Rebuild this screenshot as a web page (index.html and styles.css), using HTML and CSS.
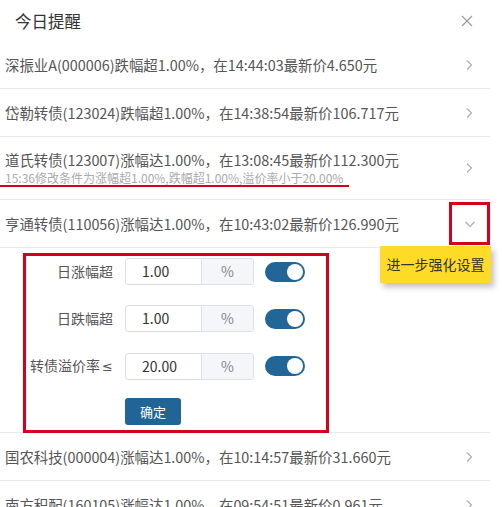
FILE: index.html
```html
<!DOCTYPE html>
<html lang="zh-CN">
<head>
<meta charset="utf-8">
<title>今日提醒</title>
<link rel="stylesheet" href="styles.css">
</head>
<body>
<div class="panel">
  <div class="header">
    <span class="title">今日提醒</span>
    <svg class="close" width="12" height="12" viewBox="0 0 12 12"><path d="M1 1L11 11M11 1L1 11" stroke="#999" stroke-width="1.1" fill="none"/></svg>
  </div>
  <ul class="list">
    <li class="row">
      <div class="text">深振业A(000006)跌幅超1.00%，在14:44:03最新价4.650元</div>
      <span class="chev"><svg width="8" height="12" viewBox="0 0 8 12"><path d="M2 1.5L6.5 6L2 10.5" stroke="#aaa" stroke-width="1.1" fill="none"/></svg></span>
    </li>
    <li class="row">
      <div class="text">岱勒转债(123024)跌幅超1.00%，在14:38:54最新价106.717元</div>
      <span class="chev"><svg width="8" height="12" viewBox="0 0 8 12"><path d="M2 1.5L6.5 6L2 10.5" stroke="#aaa" stroke-width="1.1" fill="none"/></svg></span>
    </li>
    <li class="row row-tall">
      <div class="text-wrap">
        <div class="text">道氏转债(123007)涨幅达1.00%，在13:08:45最新价112.300元</div>
        <div class="sub"><span class="mark">15:36修改条件为涨幅超1.00%,跌幅超1.00%,溢价率小于20.00%</span></div>
      </div>
      <span class="chev"><svg width="8" height="12" viewBox="0 0 8 12"><path d="M2 1.5L6.5 6L2 10.5" stroke="#aaa" stroke-width="1.1" fill="none"/></svg></span>
    </li>
    <li class="row row-open">
      <div class="text">亨通转债(110056)涨幅达1.00%，在10:43:02最新价126.990元</div>
      <span class="chev chev-box"><svg width="12" height="8" viewBox="0 0 12 8"><path d="M1.5 2L6 6.5L10.5 2" stroke="#aaa" stroke-width="1.1" fill="none"/></svg></span>
      <div class="tip">进一步强化设置</div>
    </li>
    <li class="settings">
      <div class="form">
        <label class="lbl">日涨幅超</label>
        <div class="group"><span class="val">1.00</span><span class="addon">%</span></div>
        <span class="toggle"><span class="knob"></span></span>

        <label class="lbl">日跌幅超</label>
        <div class="group"><span class="val">1.00</span><span class="addon">%</span></div>
        <span class="toggle"><span class="knob"></span></span>

        <label class="lbl">转债溢价率<span class="le">≤</span></label>
        <div class="group"><span class="val">20.00</span><span class="addon">%</span></div>
        <span class="toggle"><span class="knob"></span></span>

        <span></span>
        <button class="btn">确定</button>
        <span></span>
      </div>
    </li>
    <li class="row">
      <div class="text">国农科技(000004)涨幅达1.00%，在10:14:57最新价31.660元</div>
      <span class="chev"><svg width="8" height="12" viewBox="0 0 8 12"><path d="M2 1.5L6.5 6L2 10.5" stroke="#aaa" stroke-width="1.1" fill="none"/></svg></span>
    </li>
    <li class="row">
      <div class="text">南方积配(160105)涨幅达1.00%，在09:54:51最新价0.961元</div>
      <span class="chev"><svg width="8" height="12" viewBox="0 0 8 12"><path d="M2 1.5L6.5 6L2 10.5" stroke="#aaa" stroke-width="1.1" fill="none"/></svg></span>
    </li>
  </ul>
</div>
</body>
</html>
```

FILE: styles.css
```css
html, body {
  margin: 0;
  padding: 0;
  background: #fff;
  overflow: hidden;
}
body {
  font-family: "Noto Sans CJK SC", "Noto Sans", sans-serif;
  color: #555;
  width: 502px;
  height: 507px;
}
.panel {
  width: 502px;
}
.header {
  height: 40px;
  display: flex;
  align-items: center;
  justify-content: space-between;
  padding: 0 29px 0 15px;
  box-sizing: border-box;
}
.title {
  font-size: 16.5px;
  color: #333;
  line-height: 22px;
  margin-top: 2px;
}
.close {
  display: block;
  margin-top: 1px;
}
.list {
  list-style: none;
  margin: 0;
  padding: 0;
  width: 490px;
}
.row {
  position: relative;
  height: 47px;
  border-bottom: 1px solid #e9e9f1;
  display: flex;
  align-items: center;
  justify-content: space-between;
  padding-left: 5px;
  padding-right: 15px;
}
.row:first-child {
  border-top: 1px solid transparent;
}
.row-tall {
  height: 62px;
}
.text {
  font-size: 14.4px;
  line-height: 20px;
  color: #555;
  white-space: nowrap;
}
.text-wrap {
  display: flex;
  flex-direction: column;
}
.sub {
  font-size: 12px;
  line-height: 16px;
  color: #aaa;
  white-space: nowrap;
  position: relative;
}
.mark {
  display: inline-block;
  margin-left: -5px;
  padding: 0 6px 0 5px;
  line-height: 15px;
  border-bottom: 2px solid #d5001c;
}
.chev {
  display: flex;
  align-items: center;
  justify-content: center;
  width: 12px;
}
.chev-box {
  position: absolute;
  right: 0;
  top: 2px;
  width: 35px;
  height: 37px;
  border: 3px solid #d5001c;
}
.tip {
  position: absolute;
  left: 380px;
  top: 46px;
  width: 111px;
  height: 37px;
  background: #fddb27;
  color: #333;
  font-size: 14px;
  line-height: 37px;
  text-align: center;
  box-shadow: 3px 4px 6px rgba(0, 0, 0, 0.25);
  z-index: 2;
}
.settings {
  height: 185px;
  border-bottom: 1px solid #e9e9f1;
  padding: 5px 0 0 23px;
  box-sizing: border-box;
}
.form {
  width: 300px;
  border: 3px solid #d5001c;
  padding: 2px 0 5px 0;
  display: grid;
  grid-template-columns: 87px 129px 40px;
  column-gap: 12px;
  row-gap: 20px;
  align-items: center;
}
.lbl {
  text-align: right;
  font-size: 14px;
  color: #555;
  line-height: 27px;
}
.le {
  font-family: "DejaVu Sans", sans-serif;
  font-size: 13px;
  margin-left: 2px;
}
.group {
  display: flex;
  height: 27px;
  border: 1px solid #dcdfe6;
  border-radius: 3px;
  box-sizing: border-box;
  overflow: hidden;
}
.val {
  width: 76px;
  padding-left: 16px;
  box-sizing: border-box;
  font-size: 14px;
  line-height: 25px;
  color: #333;
  border-right: 1px solid #dcdfe6;
}
.addon {
  flex: 1;
  background: #f5f6fa;
  text-align: center;
  font-size: 14px;
  line-height: 25px;
  color: #888;
}
.toggle {
  position: relative;
  display: block;
  width: 40px;
  height: 20px;
  border-radius: 10px;
  background: #226698;
  margin-left: -1px;
}
.knob {
  position: absolute;
  right: 2px;
  top: 2px;
  width: 16px;
  height: 16px;
  border-radius: 50%;
  background: #fff;
}
.btn {
  width: 56px;
  height: 27px;
  margin-top: -2px;
  border: none;
  border-radius: 3px;
  background: #216596;
  color: #fff;
  font-family: "Noto Sans CJK SC", sans-serif;
  font-size: 13px;
  padding: 0;
}
```
